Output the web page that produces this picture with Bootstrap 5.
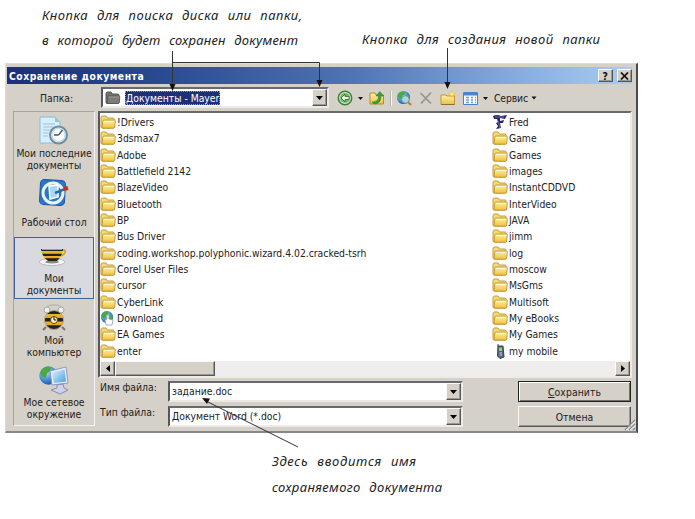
<!DOCTYPE html>
<html lang="ru">
<head>
<meta charset="utf-8">
<title>Сохранение документа</title>
<link rel="stylesheet" href="https://cdn.jsdelivr.net/npm/bootstrap@5.3.0/dist/css/bootstrap.min.css">
<style>
body{width:695px;height:519px;background:#fff;color:#222;font:10.3px/12px "DejaVu Sans Condensed","DejaVu Sans",sans-serif;}
svg{display:block;flex:none}
.notes-top{height:63px;padding-left:40px}
.hand{font:italic 13px "Noto Sans",sans-serif;fill:#222;word-spacing:5px}
.dialog{width:633px;height:370px;margin-left:5px;background:#d5d0c8;border:1px solid #dedbd5;border-right:2px solid #484a50;border-bottom:2px solid #85888c;padding:3px 4px 0 1px}
.title-bar{height:17px;background:linear-gradient(90deg,#1c2f78 0,#294b92 25%,#4e74b4 55%,#86ade0 82%,#a9cdf0);color:#fff;font:bold 10.3px "DejaVu Sans Condensed",sans-serif;letter-spacing:.5px;padding-left:2px}
.raised{background:#d5d0c8;border:1px solid;border-color:#fbfaf8 #55565a #55565a #fbfaf8;box-shadow:inset -1px -1px #9b9892}
.sunken{background:#fff;border:2px solid;border-color:#66696d #eeebe6 #eeebe6 #55585c}
.cap-btn{width:15px;height:13px;color:#111}
.tools{height:27px}
.tools-label{width:94px;padding-left:33px}
.look-in{width:228px;height:21px;padding-left:2px}
.chosen{background:#1e2f78;color:#fff;outline:1px dotted #aaa26f;outline-offset:-1px;height:14px;line-height:14px;padding:0 1px;margin-left:4px}
.drop{width:15px;height:100%}
.places{width:83px;height:315px;margin-left:6px;border:1px solid;border-color:#a7a49e #f6f4f0 #f6f4f0 #a7a49e;text-align:center;line-height:12.3px}
.place{height:62.3px;padding-top:4px}
.place.on{background:#d8dae0;outline:1px solid #45619c;outline-offset:-1px}
.place svg{margin:0 auto}
.caption-text{margin-top:1px}
.files{width:534px;height:267px;margin-left:3px;color:#222}
.file-cols{height:248px;padding-top:1px}
.file-col{width:392px}
.file-row{height:16.32px;white-space:nowrap}
.file-row svg{margin-right:1px}
.track{height:15px;background:#f0eeec}
.arrow-btn{width:15px}
.thumb{width:100px}
.bottom-fields{padding:3px 1px 0 4px}
.field{width:295px;height:21px;padding-left:2px;line-height:17px}
.field-label{width:69px;padding-left:1px}
.act{width:113px;height:21px;letter-spacing:.1px}
.act.primary-act{border:1px solid #222;box-shadow:inset 1px 1px #fff,inset -1px -1px #6e6e6e}
.arrows{left:0;top:0;pointer-events:none}
.grip{right:0;bottom:0}
</style>
<script src="https://cdn.jsdelivr.net/npm/bootstrap@5.3.0/dist/js/bootstrap.bundle.min.js"></script>
</head>
<body class="position-relative overflow-hidden">
<svg width="0" height="0" class="position-absolute">
<defs>
<linearGradient id="gy" x1="0" y1="0" x2="0" y2="1"><stop offset="0" stop-color="#fff3a8"/><stop offset="1" stop-color="#eebf3c"/></linearGradient>
<radialGradient id="gb" cx=".35" cy=".3" r=".8"><stop offset="0" stop-color="#b8e4ff"/><stop offset=".6" stop-color="#3f86d0"/><stop offset="1" stop-color="#1d4a98"/></radialGradient>
<linearGradient id="gs" x1="0" y1="0" x2="1" y2="1"><stop offset="0" stop-color="#dff5ff"/><stop offset="1" stop-color="#4a9be0"/></linearGradient>
<linearGradient id="bee" x1="0" y1="0" x2="0" y2="1"><stop offset="0" stop-color="#222"/><stop offset=".17" stop-color="#222"/><stop offset=".2" stop-color="#f0b822"/><stop offset=".37" stop-color="#e6a818"/><stop offset=".4" stop-color="#222"/><stop offset=".56" stop-color="#222"/><stop offset=".6" stop-color="#f0b822"/><stop offset=".76" stop-color="#e6a818"/><stop offset=".8" stop-color="#222"/></linearGradient>
<symbol id="folder" viewBox="0 0 16 15"><path d="M1 12.500V3.200Q1 1.500 2.500 1.500H6L7.500 3.500H13Q14.200 3.500 14.200 5V12.500Q14.200 13.500 13 13.500H2Q1 13.500 1 12.500Z" fill="#f4d977" stroke="#c79b38"/><path d="M2.800 6.500Q3 5.500 4 5.500H14.500Q15.500 5.500 15.300 6.500L14.700 12.700Q14.500 13.700 13.500 13.700H3Q2 13.700 2.100 12.700Z" fill="url(#gy)" stroke="#ba8a2c" stroke-width=".8"/><path d="M3.800 7H14" stroke="#fffbd5"/></symbol>
<symbol id="globe" viewBox="0 0 16 16"><circle cx="8" cy="8" r="7" fill="url(#gb)"/><path d="M3 3Q7 0 10 2L9 5 7 6 6 10 3 9 1.500 6ZM11 6L14.500 6 14.500 10 12 13 10 10Z" fill="#4ba945"/></symbol>
</defs>
</svg>

<div class="notes-top">
<svg width="655" height="63" class="hand">
<text x="2" y="20" textLength="260">Кнопка для поиска диска или папки,</text>
<text x="2" y="45" textLength="256">в которой будет сохранен документ</text>
<text x="322" y="44" textLength="238">Кнопка для создания новой папки</text>
</svg>
</div>

<main class="dialog position-relative">
<div class="title-bar d-flex align-items-center"><span class="me-auto">Сохранение документа</span>
<span class="raised cap-btn d-flex justify-content-center align-items-center">?</span>
<span class="raised cap-btn d-flex justify-content-center align-items-center ms-1"><svg width="9" height="8" viewBox="0 0 9 8"><path d="M1 .5L8 7.500M8 .5L1 7.500" stroke="#111" stroke-width="1.700"/></svg></span></div>

<div class="tools d-flex align-items-center">
<span class="tools-label">Папка:</span>
<div class="look-in sunken d-flex align-items-center">
<svg width="16" height="15" viewBox="0 0 16 15"><path d="M1 12.500V3.500Q1 2 2.500 2H6L7.500 4H13Q14 4 14 5.500V12Q14 13.500 12.500 13.500H2Q1 13.500 1 12.500Z" fill="#71716b" stroke="#5a5b58"/><path d="M2.500 6H14.500Q15 6 14.800 7L14.300 12.500Q14 13.500 13 13.500H2.500Z" fill="#7c7d77" stroke="#555653" stroke-width=".8"/><path d="M3.500 7H14" stroke="#999b92"/></svg>
<span class="chosen">Документы - Mayer</span>
<span class="raised drop d-flex align-items-center justify-content-center ms-auto"><svg width="7" height="4"><path d="M0 0H7L3.500 4Z"/></svg></span></div>
<svg width="215" height="24" viewBox="329 86 215 24">
<circle cx="345" cy="98" r="6.700" fill="#d9edcf" stroke="#397f39" stroke-width="1.500"/><circle cx="345" cy="98" r="5" fill="#77b866"/><path d="M341 98L345 94.200V96.400H349V99.600H345V101.800Z" fill="#efffe8" stroke="#245b29" stroke-width=".8"/>
<path d="M358 97H363L360.500 100Z" fill="#111"/>
<path d="M370 93H375L376 95H383.500V104H370Z" fill="url(#gy)" stroke="#b8892c"/><path d="M372 102Q379 102 378.500 96H376L379.800 91.500 383.500 96H381Q381 104 374 104Z" fill="#36a338" stroke="#257525" stroke-width=".5"/>
<path d="M391.500 91V106" stroke="#f9f8f5"/><path d="M390.500 91V106" stroke="#b7b3ac"/>
<use href="#globe" x="396" y="90" width="15" height="15"/><circle cx="405.500" cy="99.500" r="3.800" fill="#bee6f4" fill-opacity=".8" stroke="#6b96ad"/><path d="M408 102L411 105" stroke="#bb832c" stroke-width="2.200"/>
<path d="M420.500 93L431 103.500M431 92.500L421 103.500" stroke="#96948f" stroke-width="1.700"/>
<path d="M441 95H446L447 96H454.500V104.500H441Z" fill="url(#gy)" stroke="#c49538"/><path d="M441.500 104.500H454.500" stroke="#8b7135"/><path d="M452 90L453 93 455.500 94 453 95 452 98 451 95 448.500 94 451 93Z" fill="#fff176" stroke="#e5b832" stroke-width=".5"/>
<path d="M463.500 92.500H477.500V104.500H463.500Z" fill="#f4f9ff" stroke="#4d7ec6"/><path d="M464 94H477" stroke="#4d83d2" stroke-width="3"/><path d="M466 97.500H469M471 97.500H473M475 97.500H476M466 100H469M471 100H473M475 100H476M466 102.500H469M471 102.500H473M475 102.500H476" stroke="#759ed0" stroke-width="1.300"/>
<path d="M483 97H488L485.500 100Z" fill="#111"/>
<text x="494" y="101.500" font-size="10.300" fill="#222" textLength="34">Сервис</text>
<path d="M531.500 96.500H536.500L534 99.500Z" fill="#111"/>
</svg>
</div>

<div class="d-flex">
<nav class="places">
<div class="place"><svg width="32" height="30" viewBox="0 0 32 30"><path d="M2 1H17L22 6V27H2Z" fill="#d9edfb" stroke="#8abce0"/><path d="M17 1V6H22" fill="#8ac7ed"/><path d="M5 8H17M5 11H16M5 14H13M5 17H11M5 20H10" stroke="#9dc3e0"/><circle cx="20.500" cy="19" r="8.500" fill="#e5eff5" stroke="#6e8c9c" stroke-width="2"/><circle cx="20.500" cy="19" r="6.500" fill="#f8fcff" stroke="#bad2df"/><path d="M20.500 19L24.500 14M20.500 19H16" stroke="#47535b" stroke-width="1.300"/></svg><div class="caption-text">Мои последние<br>документы</div></div>
<div class="place"><svg width="32" height="30" viewBox="0 0 32 30"><rect x="2" y="2" width="25" height="25" rx="4" fill="#2a76ca" stroke="#1c57a3" transform="rotate(3 14 14)"/><circle cx="15" cy="15" r="10" fill="none" stroke="#e9f4ed" stroke-width="3"/><path d="M11 8L20 7V19L12 21Z" fill="#a9d8f4" stroke="#fff" stroke-width="1.500"/><path d="M17 15L27 11" stroke="#336a9f" stroke-width="2.500"/><path d="M26 11L30 10" stroke="#c33324" stroke-width="4"/></svg><div class="mt-2">Рабочий стол</div></div>
<div class="place on"><svg width="32" height="30" viewBox="0 0 32 30"><ellipse cx="14" cy="21" rx="13" ry="3.500" fill="#f7f7f7" stroke="#b9b9ba"/><ellipse cx="14" cy="21" rx="7" ry="1.500" fill="#888"/><path d="M22 10Q28 8 27 11Q26 15 20 15" fill="none" stroke="#d8a129" stroke-width="1.800"/><path d="M3 8H25Q24 16 19 20H10Q4 16 3 8Z" fill="url(#bee)"/><path d="M4 8.500H24" stroke="#c79f42"/></svg><div class="caption-text">Мои<br>документы</div></div>
<div class="place"><svg width="32" height="30" viewBox="0 0 32 30"><path d="M7 9Q8 1 16 2Q24 1 25 9" fill="none" stroke="#b9babb" stroke-width="1.500"/><circle cx="9" cy="7" r="3" fill="#eee" stroke="#aaa"/><circle cx="23" cy="7" r="3" fill="#eee" stroke="#aaa"/><path d="M8 24L5 27M24 24L27 27" stroke="#777" stroke-width="2"/><circle cx="16" cy="17" r="9.500" fill="url(#bee)" stroke="#aaa694"/><circle cx="16" cy="17" r="3.500" fill="#fff5c9" stroke="#514519"/><path d="M16 14V17H18" fill="none" stroke="#111"/></svg><div class="caption-text">Мой<br>компьютер</div></div>
<div class="place"><svg width="34" height="30" viewBox="0 0 34 30"><use href="#globe" x="1" y="0" width="21" height="21"/><path d="M13 6L29 2 31 18 15 20Z" fill="#e6edf9" stroke="#8c99c6"/><path d="M15 7.500L27.500 4.500 29 16.500 17 18Z" fill="url(#gs)"/><path d="M20 20L26 19 27 23 31 25 23 29 14 25 20 23Z" fill="#cfd2e8" stroke="#8b8daf"/></svg><div class="caption-text">Мое сетевое<br>окружение</div></div>
</nav>

<section>
<div class="files sunken">
<div class="file-cols d-flex">
<div class="file-col" id="left-files"></div><div id="right-files"></div></div>
<div class="track d-flex"><span class="raised arrow-btn d-flex align-items-center justify-content-center"><svg width="4" height="7"><path d="M4 0V7L0 3.500Z"/></svg></span><span class="raised thumb"></span><span class="raised arrow-btn d-flex align-items-center justify-content-center ms-auto"><svg width="4" height="7"><path d="M0 0V7L4 3.500Z"/></svg></span></div>
</div>
<div class="d-flex bottom-fields">
<div class="d-flex flex-column gap-1">
<div class="d-flex"><span class="field-label">Имя файла:</span><div class="field sunken d-flex"><span>задание.doc</span><span class="raised drop d-flex align-items-center justify-content-center ms-auto"><svg width="7" height="4"><path d="M0 0H7L3.500 4Z"/></svg></span></div></div>
<div class="d-flex"><span class="field-label">Тип файла:</span><div class="field sunken d-flex"><span>Документ Word (*.doc)</span><span class="raised drop d-flex align-items-center justify-content-center ms-auto"><svg width="7" height="4"><path d="M0 0H7L3.500 4Z"/></svg></span></div></div>
</div>
<div class="ms-auto d-flex flex-column gap-1"><div class="raised act primary-act d-flex align-items-center justify-content-center"><u>С</u>охранить</div><div class="raised act d-flex align-items-center justify-content-center">Отмена</div></div>
</div>
</section>
</div>
<svg class="grip position-absolute" width="12" height="12"><path d="M1 11L11 1M5 11L11 5M9 11L11 9" stroke="#85888c" stroke-width="1.300"/><path d="M2.500 11L11 2.500M6.500 11L11 6.500" stroke="#fff"/></svg>
</main>

<svg width="695" height="86" class="hand"><text x="272" y="33" textLength="144">Здесь вводится имя</text><text x="272" y="59" textLength="170">сохраняемого документа</text></svg>

<svg class="arrows position-absolute" width="695" height="519"><path d="M172.500 51V87M172.500 62.500H319.500V82M447.500 48V84M298 447L208 402" fill="none" stroke="#333"/><path d="M169.500 84H175.500L172.500 91ZM316.500 80H322.500L319.500 87ZM444.500 82H450.500L447.500 89ZM202 398L210 398.500 207 404Z" fill="#111"/></svg>

<script>
const icons={
folder:'<svg width="16" height="16"><use href="#folder"/></svg>',
web:'<svg width="16" height="16" viewBox="0 0 16 16"><use href="#globe" width="14" height="14"/><path d="M6 15L5 10 7 9V5Q8 4 9 5V9L13 10 12 15Z" fill="#fff" stroke="#8095aa" stroke-width=".7"/></svg>',
fred:'<svg width="16" height="16" viewBox="0 0 16 16"><path d="M1 2Q5 0 9 2L15 1 13 5 8 4V7L12 6 11 9 8 9 9 14 4 15 6 12 4 9 6 8 5 5 2 5Z" fill="#28246c"/><path d="M3 3L12 3M6 7L8 14" stroke="#8c8bbd" stroke-width=".7"/></svg>',
phone:'<svg width="16" height="16" viewBox="0 0 16 16"><path d="M6 1V4M6 3H11L12 14 8 15.500 5.500 13Z" fill="#536777" stroke="#344550"/><path d="M7 4.500H10V8H7Z" fill="#8ed65d"/><path d="M7.500 10H10M7.500 12H10" stroke="#d2dde3"/></svg>'};
const fill=(id,names,special)=>{document.getElementById(id).innerHTML=names.map(n=>`<div class="file-row d-flex align-items-center">${icons[special[n]||'folder']}<span>${n}</span></div>`).join('')};
fill('left-files',['!Drivers','3dsmax7','Adobe','Battlefield 2142','BlazeVideo','Bluetooth','BP','Bus Driver','coding.workshop.polyphonic.wizard.4.02.cracked-tsrh','Corel User Files','cursor','CyberLink','Download','EA Games','enter'],{Download:'web'});
fill('right-files',['Fred','Game','Games','images','InstantCDDVD','InterVideo','JAVA','jimm','log','moscow','MsGms','Multisoft','My eBooks','My Games','my mobile'],{Fred:'fred','my mobile':'phone'});
</script>
</body>
</html>
